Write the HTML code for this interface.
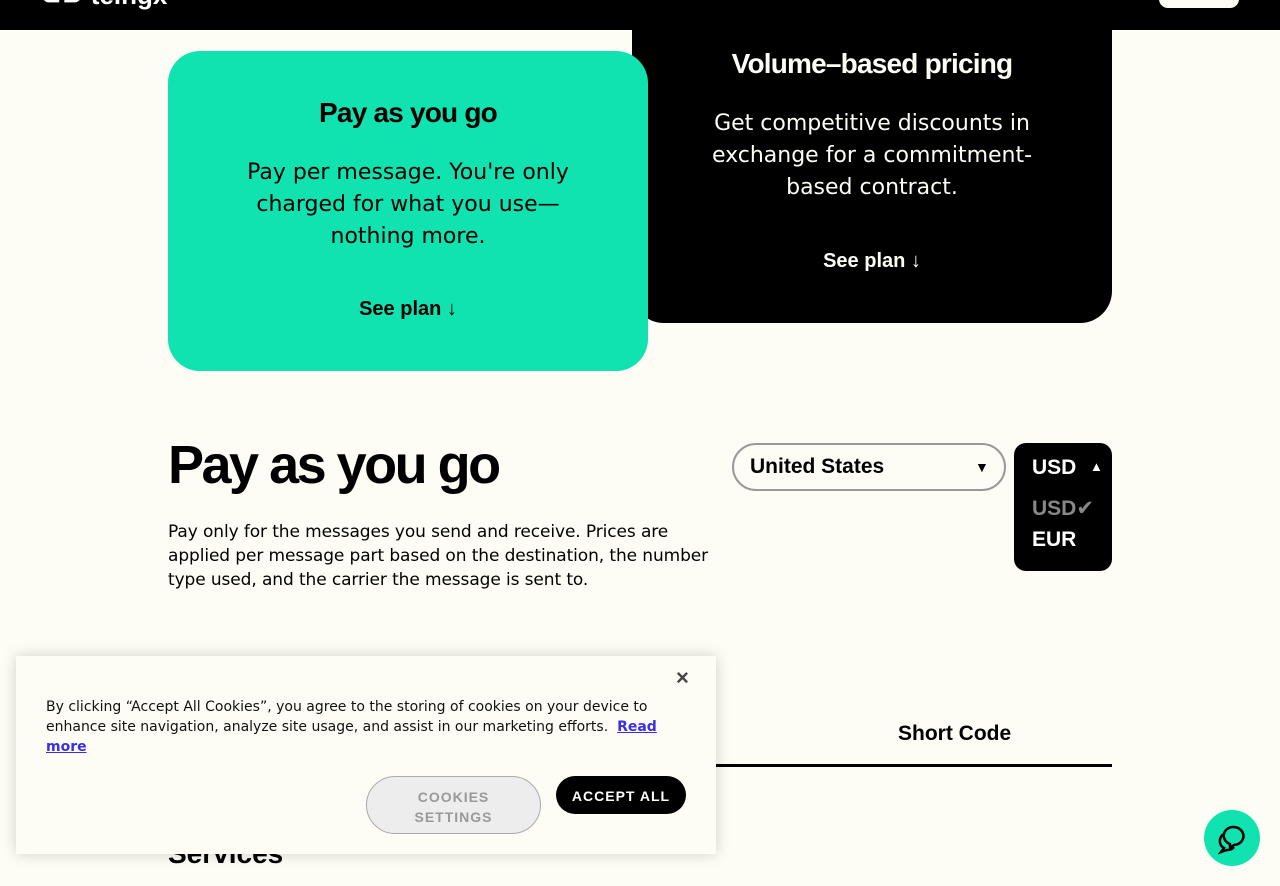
<!DOCTYPE html>
<html><head><meta charset="utf-8"><style>
body{margin:0;width:1280px;height:886px;overflow:hidden;background:#fdfdf5;font-family:"Liberation Sans","DejaVu Sans",sans-serif;position:relative;color:#000}
.a{position:absolute}
.hdr{left:0;top:0;width:1280px;height:30px;background:#000}
.card{border-radius:32px;text-align:center}
h3{margin:0;font-size:28px;font-weight:bold;letter-spacing:-0.8px}
.p{font-family:"DejaVu Sans",sans-serif;font-size:22px;line-height:32px}
.sp{font-size:20px;font-weight:bold}
</style></head><body>
<div class="a hdr"></div>
<div class="a" style="left:40px;top:-20px;color:#fff;font-size:26px;font-weight:bold">⊂⊃ teingx</div>
<div class="a" style="left:1159px;top:-10px;width:80px;height:18px;background:#fdfdf5;border-radius:9px"></div>

<div class="a card" style="left:632px;top:-20px;width:480px;height:343px;background:#000;color:#fdfdf5;border-radius:0 0 32px 32px">
 <h3 style="margin-top:68px">Volume–based pricing</h3>
 <div class="p" style="margin:28px auto 0;width:340px">Get competitive discounts in exchange for a commitment-based contract.</div>
 <div class="sp" style="margin-top:46px">See plan ↓</div>
</div>
<div class="a card" style="left:168px;top:51px;width:480px;height:320px;background:#10e3af">
 <h3 style="margin-top:46px">Pay as you go</h3>
 <div class="p" style="margin:28px auto 0;width:360px">Pay per message. You're only charged for what you use—nothing more.</div>
 <div class="sp" style="margin-top:45px">See plan ↓</div>
</div>

<div class="a" style="left:168px;top:434px;font-size:54px;font-weight:bold;letter-spacing:-2.5px">Pay as you go</div>
<div class="a" style="left:168px;top:520px;width:550px;font-family:'DejaVu Sans',sans-serif;font-size:17px;line-height:24px;letter-spacing:-0.1px">Pay only for the messages you send and receive. Prices are applied per message part based on the destination, the number type used, and the carrier the message is sent to.</div>

<div class="a" style="left:732px;top:443px;width:270px;height:44px;border:2px solid #999;border-radius:24px;box-sizing:content-box"></div>
<div class="a" style="left:750px;top:455px;font-size:21px;font-weight:bold">United States</div>
<div class="a" style="left:975px;top:459px;font-size:14px">▼</div>

<div class="a" style="left:1014px;top:443px;width:98px;height:128px;background:#000;border-radius:12px;color:#fff;font-weight:bold;font-size:21px">
 <div class="a" style="left:18px;top:13px">USD</div><div class="a" style="left:76px;top:16px;font-size:13px">▲</div>
 <div class="a" style="left:18px;top:53px;color:#888">USD✔</div>
 <div class="a" style="left:18px;top:85px">EUR</div>
</div>

<div class="a" style="left:898px;top:722px;font-size:21px;font-weight:bold">Short Code</div>
<div class="a" style="left:700px;top:764px;width:412px;height:3px;background:#000"></div>
<div class="a" style="left:168px;top:838px;font-size:28px;font-weight:bold">Services</div>

<div class="a" style="left:16px;top:656px;width:700px;height:198px;background:#fdfdf5;box-shadow:0 0 14px rgba(0,0,0,.18)">
 <div class="a" style="left:660px;top:9px;font-size:22px;color:#444;font-weight:bold">×</div>
 <div class="a" style="left:30px;top:41px;width:630px;font-family:'DejaVu Sans',sans-serif;font-size:14px;line-height:20px;color:#111">By clicking “Accept All Cookies”, you agree to the storing of cookies on your device to enhance site navigation, analyze site usage, and assist in our marketing efforts. &nbsp;<a style="color:#3a2ee8;font-weight:bold;text-decoration:underline">Read more</a></div>
 <div class="a" style="left:350px;top:120px;width:175px;height:58px;border:1px solid #aaa;border-radius:29px;background:#ededed;color:#999;font-weight:bold;font-size:14px;letter-spacing:1px;text-align:center;line-height:20px;box-sizing:border-box;padding-top:10px">COOKIES<br>SETTINGS</div>
 <div class="a" style="left:540px;top:120px;width:130px;height:38px;border-radius:19px;background:#000;color:#fff;font-weight:bold;font-size:14px;letter-spacing:1px;text-align:center;line-height:40px">ACCEPT ALL</div>
</div>

<div class="a" style="left:1204px;top:810px;width:56px;height:56px;border-radius:50%;background:#10e3af">
<svg width="56" height="56" viewBox="0 0 56 56" fill="none" stroke="#000" stroke-width="2.5"><path d="M22 20a10 9 0 1 1 8 15l-4 3v-4a10 9 0 0 1-4-14z"/><path d="M20 24a8 8 0 0 0 0 14l-3 4 6-2a8 8 0 0 0 7-3"/></svg></div>
</body></html>
